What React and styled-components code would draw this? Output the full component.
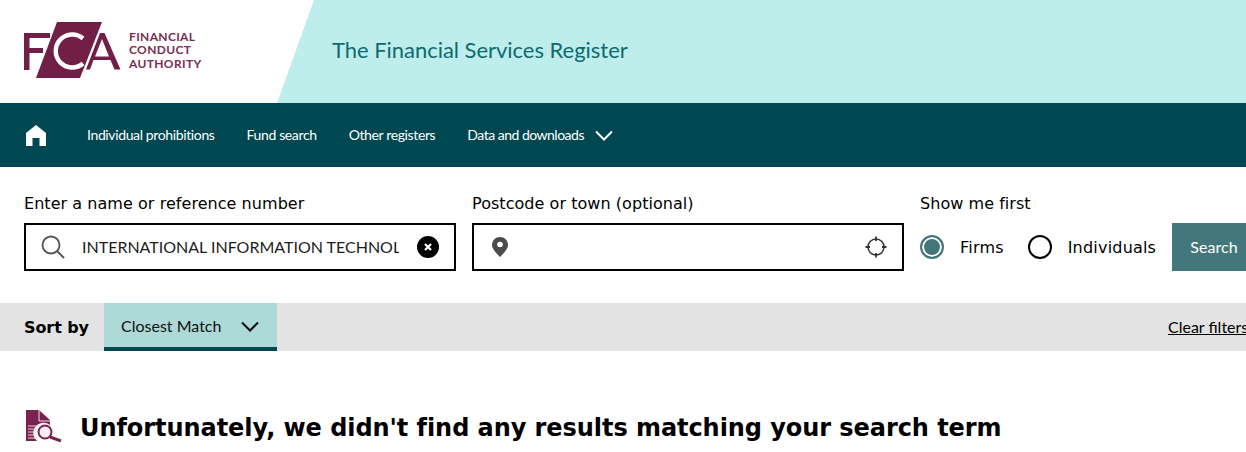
import React from "react"
import styled, { createGlobalStyle } from "styled-components"

const GlobalStyle = createGlobalStyle`
  html, body {
    margin: 0;
    padding: 0;
    background: #fff;
    overflow: hidden;
  }
  * {
    box-sizing: border-box;
  }
`

const Page = styled.div`
  width: 1290px;
  height: 452px;
  overflow: hidden;
  font-family: "DejaVu Sans", Verdana, sans-serif;
  color: #000;
`

const Masthead = styled.header`
  display: flex;
  align-items: center;
  height: 103px;
  background: #bdeeeb;
`

const LogoPanel = styled.div`
  display: flex;
  align-items: center;
  gap: 7px;
  width: 314px;
  height: 100%;
  padding: 0 0 3px 24px;
  background: #fff;
  clip-path: polygon(0 0, 100% 0, 277px 100%, 0 100%);
`

const LogoWords = styled.div`
  font: 700 12px/13.5px "Lato", sans-serif;
  letter-spacing: 0.35px;
  color: #7b2d52;
`

const SiteTitle = styled.h1`
  margin: 0 0 3px 18px;
  font: 400 22px/1 "Lato", sans-serif;
  letter-spacing: -0.03px;
  color: #0f6a70;
`

const NavBar = styled.nav`
  display: flex;
  align-items: center;
  gap: 32px;
  height: 64px;
  padding-left: 24px;
  background: #004851;
  color: #fff;
  font: 400 14px/1 "Lato", sans-serif;
`

const HomeLink = styled.a`
  display: flex;
  width: 32px;
  margin-right: -1px;
`

const NavLink = styled.a`
  display: flex;
  align-items: center;
  gap: 11px;
  letter-spacing: ${(p) => p.$tracking || -0.37}px;
`

const SearchForm = styled.section`
  display: flex;
  gap: 16px;
  padding: 27px 0 0 24px;
  height: 136px;
`

const Field = styled.div`
  display: flex;
  flex-direction: column;
  gap: 10px;
  width: ${(p) => p.$width}px;
`

const FieldLabel = styled.label`
  font-size: 16px;
  line-height: 19px;
  letter-spacing: 0.05px;
`

const InputBox = styled.div`
  display: flex;
  align-items: center;
  justify-content: space-between;
  height: 48px;
  border: 2px solid #000;
  padding: 0 15px 0 ${(p) => p.$left}px;
`

const InputText = styled.div`
  flex: 1;
  width: 316px;
  margin-left: 17px;
  margin-right: 18px;
  overflow: hidden;
  white-space: nowrap;
  font: 400 16px/1 "Lato", sans-serif;
  color: #1d1d1d;
`

const RadioRow = styled.div`
  display: flex;
  align-items: center;
  height: 48px;
`

const RadioLabel = styled.span`
  margin: 0 24px 0 16px;
  font-size: 16px;
  letter-spacing: 0.2px;
  white-space: nowrap;
`

const RadioDot = styled.span`
  flex: none;
  width: 24px;
  height: 24px;
  border-radius: 50%;
  border: 2px solid ${(p) => (p.$checked ? "#44777c" : "#000")};
  background: ${(p) => (p.$checked ? "#44777c" : "#fff")};
  box-shadow: ${(p) => (p.$checked ? "inset 0 0 0 2px #fff" : "none")};
`

const SearchButton = styled.button`
  flex: none;
  width: 84px;
  height: 48px;
  margin-left: -8px;
  border: 0;
  background: #44777c;
  color: #fff;
  font: 400 16px/1 "Lato", sans-serif;
  letter-spacing: 0.1px;
  text-align: left;
  padding-left: 18px;
`

const SortBar = styled.div`
  display: flex;
  align-items: center;
  height: 48px;
  padding-left: 24px;
  background: #e3e3e3;
`

const SortLabel = styled.span`
  width: 80px;
  font-size: 16px;
  font-weight: 700;
  letter-spacing: -0.08px;
`

const SortSelect = styled.div`
  display: flex;
  align-items: center;
  justify-content: space-between;
  width: 173px;
  height: 48px;
  padding: 2px 18px 0 17px;
  background: #addad8;
  border-bottom: 4px solid #004851;
  font: 400 16px/1 "Lato", sans-serif;
  color: #111;
`

const ClearFilters = styled.a`
  margin-left: 891px;
  font: 400 16px/1 "Lato", sans-serif;
  text-decoration: underline;
  white-space: nowrap;
`

const NoResults = styled.div`
  display: flex;
  align-items: flex-start;
  gap: 18px;
  padding: 59px 0 0 25px;
`

const NoResultsTitle = styled.h2`
  margin: 1px 0 0;
  font-size: 24px;
  line-height: 34px;
  letter-spacing: -0.06px;
  font-weight: 700;
  white-space: nowrap;
`

const Logo = () => (
  <svg width="98" height="56" viewBox="0 0 98 56" aria-hidden="true">
    <polygon points="33,0 78,0 56,56 12,56" fill="#711f47" />
    <rect x="0" y="11" width="26" height="5" fill="#711f47" />
    <rect x="0" y="11" width="5.500" height="37" fill="#711f47" />
    <rect x="0" y="26" width="19" height="5" fill="#711f47" />
    <path d="M59 16.500 A16.500 16.500 0 1 0 59 41.500" fill="none" stroke="#fff" strokeWidth="4.400" />
    <path d="M62 47.500 L76 11 H80.500 L96.500 47.500 H90.500 L86.500 38 H69.500 L66 47.500 Z M71 34.500 H85 L78 17 Z" fill="#711f47" fillRule="evenodd" />
  </svg>
)

const HomeIcon = () => (
  <svg width="24" height="22" viewBox="0 0 24 22" aria-hidden="true">
    <path d="M12 1 L22 9 V22 H15.500 V14 H8.500 V22 H2 V9 Z" fill="#fff" />
  </svg>
)

const Chevron = ({ colour, width = 18 }) => (
  <svg width={width} height="11" viewBox="0 0 18 11" aria-hidden="true">
    <path d="M1 1.500 L9 9.500 L17 1.500" fill="none" stroke={colour} strokeWidth="2" />
  </svg>
)

const SearchIcon = () => (
  <svg width="24" height="24" viewBox="0 0 24 24" aria-hidden="true">
    <circle cx="10" cy="10" r="8.500" fill="none" stroke="#555" strokeWidth="1.800" />
    <path d="M16 16 L23 23" stroke="#555" strokeWidth="2" />
  </svg>
)

const ClearIcon = () => (
  <svg width="22" height="22" viewBox="0 0 22 22" aria-hidden="true">
    <circle cx="11" cy="11" r="11" fill="#000" />
    <path d="M8 8 L14 14 M14 8 L8 14" stroke="#fff" strokeWidth="2.200" />
  </svg>
)

const PinIcon = () => (
  <svg width="16" height="20" viewBox="0 0 16 20" aria-hidden="true">
    <path d="M8 0 C3.600 0 0 3.400 0 7.800 C0 12 4.500 16.500 8 20 C11.500 16.500 16 12 16 7.800 C16 3.400 12.400 0 8 0 Z" fill="#4a4a4a" />
    <circle cx="8" cy="7.500" r="2.800" fill="#fff" />
  </svg>
)

const LocateIcon = () => (
  <svg width="22" height="22" viewBox="0 0 22 22" aria-hidden="true">
    <circle cx="11" cy="11" r="8" fill="none" stroke="#333" strokeWidth="1.500" />
    <path d="M11 0.500 V5 M11 17 V21.500 M0.500 11 H5 M17 11 H21.500" stroke="#333" strokeWidth="1.800" />
  </svg>
)

const NoResultsIcon = () => (
  <svg width="37" height="32" viewBox="0 0 37 32" aria-hidden="true">
    <path d="M1 0 H14 L25 10 V15 A10 10 0 0 0 12 31 H1 Z" fill="#7a2250" />
    <path d="M14 0 V11 H25" fill="none" stroke="#f3dfe8" strokeWidth="1" />
    <path d="M3 16 H14 M3 19 H13 M3 22 H11 M3 25 H11 M3 28 H12" stroke="#e9d3de" strokeWidth="1" />
    <circle cx="20" cy="22" r="6.500" fill="#fbeef3" stroke="#7a2250" strokeWidth="2" />
    <path d="M25 27 L36 31" stroke="#7a2250" strokeWidth="3" />
  </svg>
)

const App = () => (
  <Page>
    <GlobalStyle />
    <Masthead>
      <LogoPanel>
        <Logo />
        <LogoWords>
          FINANCIAL
          <br />
          CONDUCT
          <br />
          AUTHORITY
        </LogoWords>
      </LogoPanel>
      <SiteTitle>The Financial Services Register</SiteTitle>
    </Masthead>
    <NavBar>
      <HomeLink>
        <HomeIcon />
      </HomeLink>
      <NavLink>Individual prohibitions</NavLink>
      <NavLink>Fund search</NavLink>
      <NavLink>Other registers</NavLink>
      <NavLink $tracking={-0.5}>
        Data and downloads
        <Chevron colour="#fff" />
      </NavLink>
    </NavBar>
    <SearchForm>
      <Field $width={432}>
        <FieldLabel>Enter a name or reference number</FieldLabel>
        <InputBox $left={15}>
          <SearchIcon />
          <InputText>INTERNATIONAL INFORMATION TECHNOLOGY</InputText>
          <ClearIcon />
        </InputBox>
      </Field>
      <Field $width={432}>
        <FieldLabel>Postcode or town (optional)</FieldLabel>
        <InputBox $left={18}>
          <PinIcon />
          <LocateIcon />
        </InputBox>
      </Field>
      <Field $width={340}>
        <FieldLabel>Show me first</FieldLabel>
        <RadioRow>
          <RadioDot $checked />
          <RadioLabel>Firms</RadioLabel>
          <RadioDot />
          <RadioLabel>Individuals</RadioLabel>
          <SearchButton>Search</SearchButton>
        </RadioRow>
      </Field>
    </SearchForm>
    <SortBar>
      <SortLabel>Sort by</SortLabel>
      <SortSelect>
        Closest Match
        <Chevron colour="#111" />
      </SortSelect>
      <ClearFilters>Clear filters</ClearFilters>
    </SortBar>
    <NoResults>
      <NoResultsIcon />
      <NoResultsTitle>Unfortunately, we didn't find any results matching your search term</NoResultsTitle>
    </NoResults>
  </Page>
)

export default App
